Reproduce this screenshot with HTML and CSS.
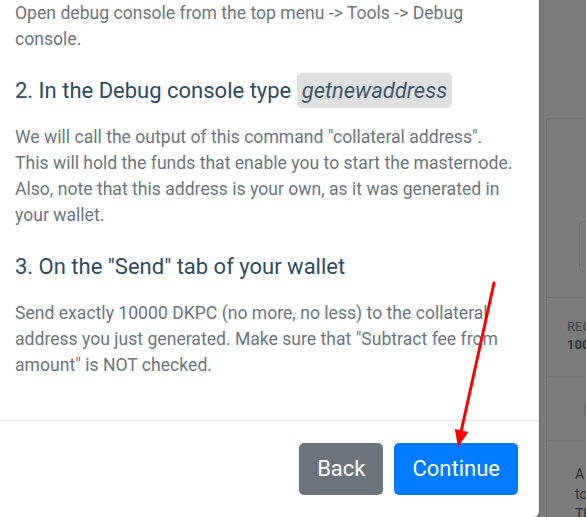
FILE: index.html
```html
<!DOCTYPE html>
<html>
  <head>
    <meta charset="UTF-8">
    <title>Masternode setup</title>
    <link rel="stylesheet" href="styles.css">
  </head>
  <body>
    <div class="screen">
      <div class="modal">
        <div class="modal-body">
          <p>Open debug console from the top menu -&gt; Tools -&gt; Debug console.</p>
          <h5 class="step-title">2. In the Debug console type <code>getnewaddress</code></h5>
          <p>We will call the output of this command "collateral address". This will hold the funds that enable you to start the masternode. Also, note that this address is your own, as it was generated in your wallet.</p>
          <h5 class="step-title">3. On the "Send" tab of your wallet</h5>
          <p>Send exactly 10000 DKPC (no more, no less) to the collateral address you just generated. Make sure that "Subtract fee from amount" is NOT checked.</p>
        </div>
        <div class="modal-footer">
          <button class="btn btn-back">Back</button>
          <button class="btn btn-continue">Continue</button>
        </div>
      </div>

      <div class="backdrop">
        <div class="bg-card">
          <div class="bg-row bg-top">
            <div class="bg-input"></div>
          </div>
          <div class="bg-row bg-stat">
            <div class="bg-label">REC</div>
            <div class="bg-value">100</div>
          </div>
          <div class="bg-row bg-mid">
            <span class="bg-dot"></span>
          </div>
          <div class="bg-row bg-text">
            A<br>to<br>Th
          </div>
        </div>
      </div>

      <!-- red arrow drawn on top of the screenshot -->
      <svg class="annotation" width="586" height="517" viewBox="0 0 586 517">
        <line x1="494" y1="283" x2="461" y2="432" stroke="#ff0000" stroke-width="3" stroke-linecap="round"/>
        <polygon points="458,447 454.8,428.9 468.4,431.9" fill="#ff0000"/>
      </svg>
    </div>
  </body>
</html>
```

FILE: styles.css
```css
html, body {
  margin: 0;
  padding: 0;
}

body {
  font-family: Roboto, "Liberation Sans", sans-serif;
  background: #7b7b7b;
}

.screen {
  position: relative;
  display: flex;
  width: 586px;
  height: 517px;
  overflow: hidden;
}

/* modal */
.modal {
  width: 539px;
  flex-shrink: 0;
  display: flex;
  flex-direction: column;
  background: #fff;
  border-right: 1px solid #686868;
  border-bottom-right-radius: 6px;
}

.modal-body {
  flex: 1;
  padding: 0 25px 24px 15px;
}

.modal-body p {
  margin: 0 0 18px;
  font-size: 17.6px;
  line-height: 26px;
  color: #6c757d;
}

.modal-body p:last-child {
  margin-bottom: 0;
}

.step-title {
  margin: 25px 0 20px;
  font-size: 22px;
  font-weight: 400;
  line-height: 27px;
  color: #2d4b5f;
}

.step-title code {
  font-family: Roboto, "Liberation Sans", sans-serif;
  font-style: italic;
  font-size: 22px;
  color: #3b5869;
  background: #e0e0e0;
  border-radius: 5px;
  padding: 5px 5px;
}

.modal-footer {
  display: flex;
  justify-content: flex-end;
  gap: 11px;
  padding: 22px 21px 22px;
  border-top: 1px solid #e6e6e6;
}

.btn {
  font-family: Roboto, "Liberation Sans", sans-serif;
  font-size: 22px;
  line-height: 34px;
  padding: 9px 18px;
  border: none;
  border-radius: 5px;
  color: #fff;
}

.btn-back {
  background: #6c757d;
}

.btn-continue {
  background: #007bff;
}

/* dimmed page behind the modal */
.backdrop {
  flex: 1;
  padding: 118px 0 0 6px;
  background: #7b7b7b;
}

.bg-card {
  border: 1px solid #6d6d6d;
  border-right: none;
  border-top-left-radius: 5px;
}

.bg-row {
  border-bottom: 1px solid #6d6d6d;
}

.bg-top {
  height: 179px;
  padding: 102px 0 0 32px;
  box-sizing: border-box;
}

.bg-input {
  height: 49px;
  border: 1px solid #6d6d6d;
  border-right: none;
  border-radius: 5px 0 0 5px;
}

.bg-stat {
  height: 79px;
  padding: 20px 0 0 20px;
  box-sizing: border-box;
  font-size: 13px;
  line-height: 18px;
  color: #2f3337;
}

.bg-label {
  color: #3c4146;
}

.bg-value {
  font-weight: 700;
}

.bg-mid {
  height: 64px;
  padding: 24px 0 0 37px;
  box-sizing: border-box;
}

.bg-dot {
  display: block;
  width: 10px;
  height: 16px;
  border-radius: 5px;
  background: #6f6f6f;
}

.bg-text {
  border-bottom: none;
  padding: 23px 0 0 28px;
  font-size: 14px;
  line-height: 20px;
  color: #2f3337;
}

.annotation {
  position: absolute;
  left: 0;
  top: 0;
  pointer-events: none;
}
```
